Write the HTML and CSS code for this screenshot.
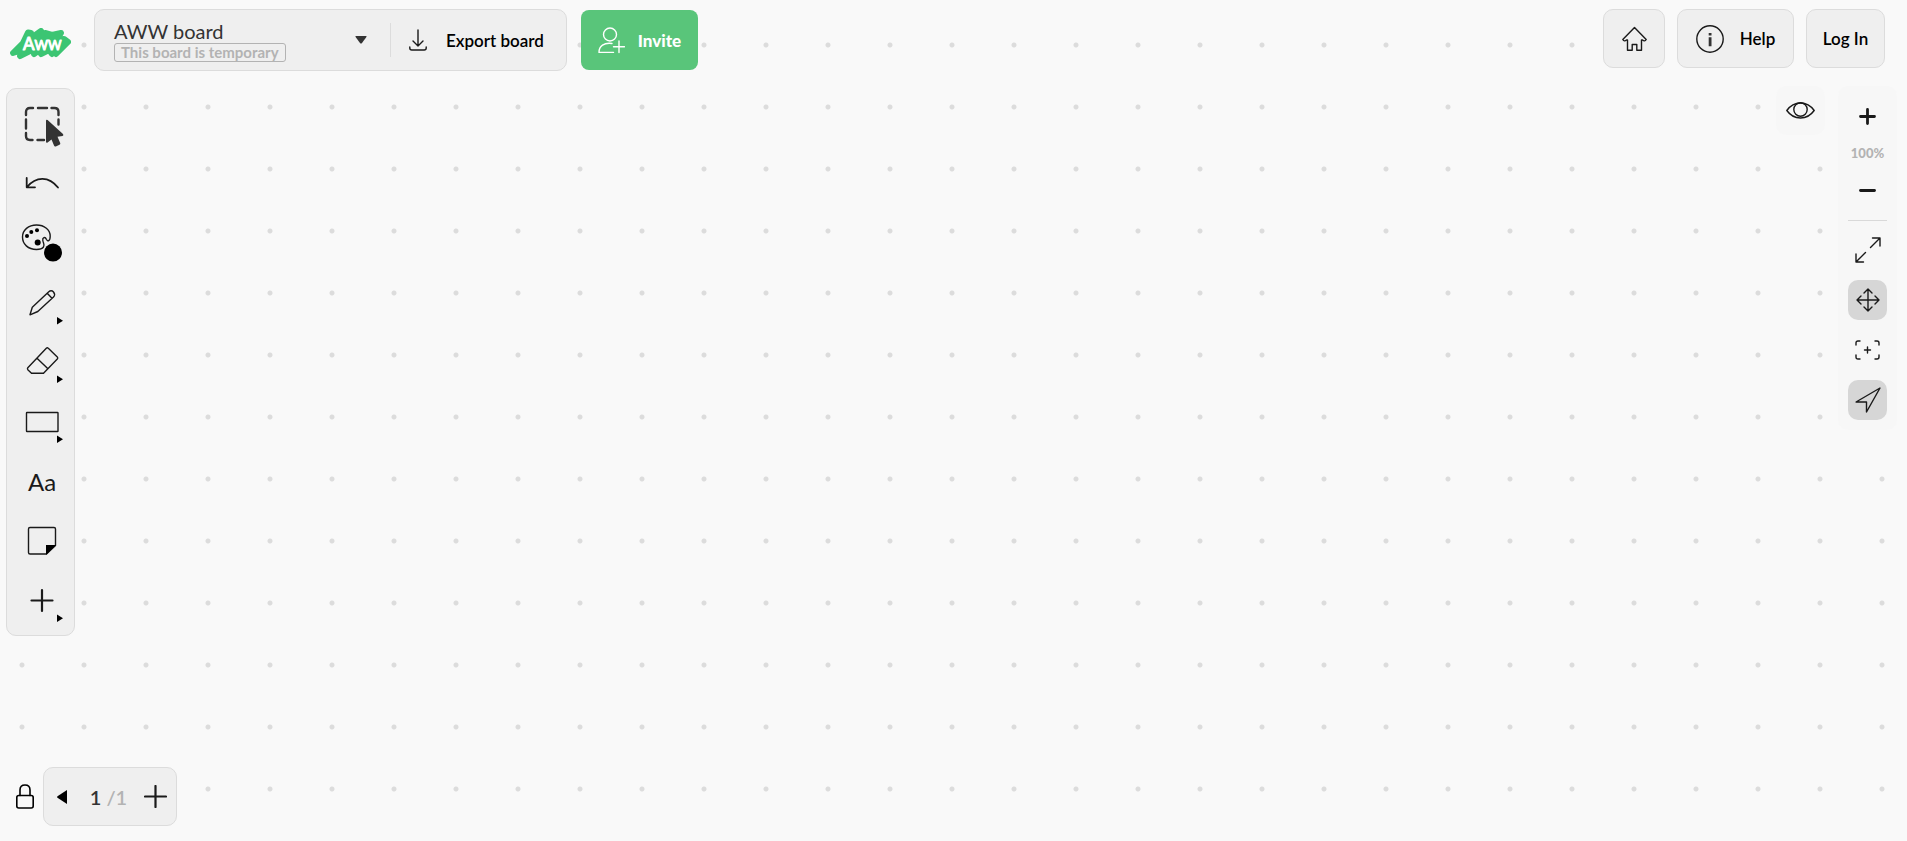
FILE: index.html
```
<!doctype html>
<html lang="en">
<head>
	<meta charset="UTF-8">
	<meta name="viewport" content="width=device-width, initial-scale=1">
	<title>AWW board</title>
	<link rel="stylesheet" href="styles.css">
</head>
<body>
	<!-- top bar -->
	<header class="topbar">
		<a href="#" class="logo" aria-label="AWW">
			<svg width="61" height="32" viewBox="0 0 61 32">
				<path class="logo-blob" d="M3 25L13 15L18 4.500L21 5L17 13L31 3L26 12L35 5L42 7L51 5L46 13L54 11L58 14L46 26L49 19L42 26L39 22L31 26L32 20L24 26L24 21L10 28L13 22Z"/>
				<text class="logo-text" x="13" y="22"><tspan class="logo-first">A</tspan>WW</text>
			</svg>
		</a>
		<div class="panel board">
			<button class="board-name">
				<span class="board-info">
					<span class="board-title">AWW board</span>
					<span class="board-tag">This board is temporary</span>
				</span>
				<svg width="12" height="8" viewBox="0 0 12 8"><path class="fill-dark" d="M1 0h10q1 0 .4 1L7 7q-1 1-2 0L.6 1Q0 0 1 0z"/></svg>
			</button>
			<button class="export">
				<svg width="18" height="22" viewBox="0 0 18 22"><path d="M9 1v16M4 12l5 5 5-5M.8 18v1q0 2 2 2h12.400q2 0 2-2v-1"/></svg>
				Export board
			</button>
		</div>
		<button class="invite">
			<svg width="27" height="27" viewBox="0 0 27 27"><circle cx="12" cy="7.500" r="6.500"/><path d="M14 16.500C6 15.500 1 19 1 25.400H15.500M21 14v11.500M15.500 19.700h11"/></svg>
			Invite
		</button>
		<nav class="account">
			<button class="panel home" aria-label="Home">
				<svg width="25" height="26" viewBox="0 0 25 26"><path d="M12.500 1.500L.8 13.500q1.500 2.500 3.700.5h1v10.200h4.700v-5.700h4.600v5.700h4.700V14h1q2.200 2 3.700-.5z"/></svg>
			</button>
			<button class="panel help">
				<svg width="28" height="28" viewBox="0 0 28 28"><circle cx="14" cy="14" r="13.200"/><path class="fill-dark" d="M12.700 8h2.800v2.600h-2.800zM12.700 12.200h2.800v9h-2.800z"/></svg>
				Help
			</button>
			<button class="panel login">Log In</button>
		</nav>
	</header>

	<main class="workspace">
		<!-- drawing tools -->
		<div class="panel tools">
			<button aria-label="Select">
				<svg width="47" height="47" viewBox="0 0 47 47">
					<path class="marquee" d="M9 15v-3q0-4 4-4h3M21 8h9M34.500 8h3q4 0 4 4v3M41.500 19.500v5M9 19.500v9M9 33v3q0 4 4 4h2.500M20.500 40h6.500"/>
					<path class="fill-dark" d="M29 21q0-2 1.600-1L46 34q1 1.500-.5 1.900l-5 .8 2.700 6.300q.5 1.300-.7 1.800l-3.700 1.600q-1.300.4-1.800-.8L34.500 39.500l-3.900 3q-1.600.7-1.600-1z"/>
				</svg>
			</button>
			<button aria-label="Undo">
				<svg width="47" height="47" viewBox="0 0 47 47"><path class="thick" d="M41 27.500C32 16 19 16 10 27M9.700 18v9.300H18"/></svg>
			</button>
			<button aria-label="Color">
				<svg width="47" height="47" viewBox="0 0 47 47">
					<path d="M19.500 6C27.500 6 33.200 11 33.200 17C33.200 22.500 30.500 22.500 29.500 20.500C28 17 25.300 18.500 25.800 21.500C26.200 24 28 25.500 26.500 28C25 30 22 30.500 19.500 30.500C11 30.500 5.500 25 5.500 18C5.500 11 11.500 6 19.500 6z"/>
					<g class="fill-black"><circle cx="10" cy="17" r="2"/><circle cx="14.300" cy="13" r="2"/><circle cx="20" cy="11.300" r="2"/><circle cx="20.700" cy="23.600" r="3"/><circle cx="36" cy="33.600" r="9"/></g>
				</svg>
			</button>
			<button aria-label="Pencil">
				<svg width="47" height="47" viewBox="0 0 47 47">
					<path d="M13 35.800l2.300-7.600L31.500 13q2.800-2.500 5 0t0 5L20.800 32.500zM30.200 14.300l4.800 5"/>
					<path class="fill-black" d="M40 38v7.500l6-3.700z"/>
				</svg>
			</button>
			<button aria-label="Eraser">
				<svg width="47" height="47" viewBox="0 0 47 47">
					<path d="M29.300 10.300q1-1 2 0l9 8.600q1 1 0 2L26.500 35.200H14.500l-3.700-3.500q-.7-1 0-2zM20 20.200l10.700 10.300"/>
					<path class="fill-black" d="M40 37.500V45l6-3.700z"/>
				</svg>
			</button>
			<button aria-label="Shape">
				<svg width="47" height="47" viewBox="0 0 47 47">
					<rect x="9.500" y="14.500" width="31.500" height="19" rx=".5"/>
					<path class="fill-black" d="M40 37.500V45l6-3.700z"/>
				</svg>
			</button>
			<button class="text-tool">Aa</button>
			<button aria-label="Sticky note">
				<svg width="47" height="47" viewBox="0 0 47 47">
					<path d="M13 10.500h24q1.500 0 1.500 1.500v16.500L29.500 37H13q-1.500 0-1.500-1.500V12q0-1.500 1.500-1.500z"/>
					<path class="fill-black" d="M29 28h10l-9.500 9.500H29z"/>
				</svg>
			</button>
			<button aria-label="More tools">
				<svg width="47" height="47" viewBox="0 0 47 47">
					<path class="bold" d="M14.500 23.500h21M25 13v21"/>
					<path class="fill-black" d="M40 37.500V45l6-3.700z"/>
				</svg>
			</button>
		</div>

		<!-- view controls -->
		<div class="view">
			<button class="soft preview" aria-label="Preview">
				<svg width="29" height="17" viewBox="0 0 29 17"><path d="M.8 8.500C8-1.500 21-1.500 28.200 8.500C21 18.500 8 18.500.8 8.500z"/><circle cx="14.500" cy="7.500" r="6.700"/></svg>
			</button>
			<div class="soft zoom">
				<button aria-label="Zoom in">
					<svg width="17" height="17" viewBox="0 0 17 17"><path class="heavy" d="M1.500 8.500h14M8.500 1.500v14"/></svg>
				</button>
				<span class="zoom-level">100%</span>
				<button aria-label="Zoom out">
					<svg width="17" height="17" viewBox="0 0 17 17"><path class="heavy" d="M1.500 8.500h14"/></svg>
				</button>
				<hr>
				<button aria-label="Full screen">
					<svg width="26" height="26" viewBox="0 0 26 26"><path d="M15.500 10.500L25 1M17.500 1H25v8M10.500 15.500L1 25M1 17v8h7.500"/></svg>
				</button>
				<button class="on" aria-label="Pan">
					<svg width="24" height="24" viewBox="0 0 24 24"><path d="M1 12h22M12 1v22M8 5l4-4 4 4M8 19l4 4 4-4M5 8l-4 4 4 4M19 8l4 4-4 4"/></svg>
				</button>
				<button aria-label="Center">
					<svg width="26" height="20" viewBox="0 0 26 20"><path d="M1 5V3q0-2 2-2h2M20 1h2q2 0 2 2v2M24 15v2q0 2-2 2h-2M5 19H3q-2 0-2-2v-2M9.500 10h6M12.500 7v6"/></svg>
				</button>
				<button class="on" aria-label="Follow">
					<svg width="26" height="26" viewBox="0 0 26 26"><path d="M25 1L1 15h10.500v10z"/></svg>
				</button>
			</div>
		</div>
	</main>

	<!-- pages -->
	<footer class="pages">
		<button class="lock" aria-label="Lock">
			<svg width="18" height="25" viewBox="0 0 18 25"><rect x=".8" y="11.500" width="16.400" height="12.500" rx="2"/><path d="M4 11.500V6q0-5 5-5t5 5v5.500"/></svg>
		</button>
		<div class="panel pager">
			<button aria-label="Previous page">
				<svg width="10" height="14" viewBox="0 0 10 14"><path class="fill-black" d="M10 0v14L.5 7.800q-.8-.8 0-1.600z"/></svg>
			</button>
			<span class="count">1 <span>/1</span></span>
			<button aria-label="Add page">
				<svg width="23" height="23" viewBox="0 0 23 23"><path class="bold" d="M1 11.500h21M11.500 1v21"/></svg>
			</button>
		</div>
	</footer>
</body>
</html>
```

FILE: styles.css
```
* {
	box-sizing: border-box;
	margin: 0;
	padding: 0;
}

body {
	display: flex;
	flex-direction: column;
	min-height: 100vh;
	font-family: Lato, "Liberation Sans", sans-serif;
	font-size: 17px;
	color: #000;
	background-color: #f9f9f9;
	background-image: radial-gradient(circle, #dcdcdc 2px, transparent 3px);
	background-size: 62px 62px;
	background-position: -9px 14px;
}

button {
	display: flex;
	align-items: center;
	justify-content: center;
	border: 0;
	background: none;
	font: inherit;
	color: inherit;
	cursor: pointer;
}

svg {
	display: block;
	flex: none;
	fill: none;
	stroke: #1a1a1a;
	stroke-width: 1.4;
	stroke-linecap: round;
	stroke-linejoin: round;
}

.thick {
	stroke-width: 1.8;
}

.bold {
	stroke-width: 2.2;
}

.heavy {
	stroke-width: 2.8;
}

.fill-dark {
	fill: #333;
	stroke: none;
}

.fill-black {
	fill: #000;
	stroke: none;
}

.panel {
	background: #efefef;
	border: 1px solid #dcdcdc;
	border-radius: 10px;
}

/* top bar */
.topbar {
	display: flex;
	align-items: flex-start;
	padding: 9px 22px 0 10px;
}

.logo {
	margin: 19px 23px 0 0;
}

.logo-blob {
	fill: #3cc573;
	stroke: #3cc573;
	stroke-width: 6;
}

.logo-text {
	fill: #fff;
	stroke: #fff;
	stroke-width: 1;
	font-size: 13px;
}

.logo-first {
	font-size: 17px;
}

.board {
	display: flex;
	align-items: center;
	width: 473px;
	height: 62px;
}

.board-name {
	justify-content: space-between;
	width: 296px;
	height: 34px;
	padding: 0 23px 0 19px;
	border-right: 1px solid #dcdcdc;
}

.board-info {
	display: flex;
	flex-direction: column;
	align-items: flex-start;
}

.board-title {
	font-size: 20px;
	line-height: 24px;
	color: #333;
}

.board-tag {
	padding: 0 6px;
	border: 1px solid #b3b3b3;
	border-radius: 3px;
	font-size: 15px;
	font-weight: 700;
	line-height: 17px;
	color: #b3b3b3;
}

.export {
	flex: 1;
	gap: 19px;
	height: 60px;
	padding-right: 4px;
	font-weight: 600;
}

.invite {
	gap: 13px;
	width: 117px;
	height: 60px;
	margin: 1px 0 0 14px;
	border-radius: 8px;
	background: #59c57a;
	color: #fff;
	font-weight: 900;
}

.invite svg {
	stroke: #fff;
}

.account {
	display: flex;
	gap: 12px;
	margin-left: auto;
	font-weight: 600;
}

.account button {
	height: 59px;
}

.home {
	width: 62px;
}

.help {
	gap: 16px;
	width: 117px;
}

.login {
	width: 79px;
}

/* tools on the left, view controls on the right */
.workspace {
	display: flex;
	flex: 1;
	align-items: flex-start;
	justify-content: space-between;
	padding: 17px 10px 17px 6px;
}

.tools {
	display: grid;
	grid-auto-rows: 1fr;
	width: 69px;
	min-height: 548px;
	padding: 5px 0;
}

.tools .text-tool {
	padding-left: 3px;
	font-size: 24px;
	color: #1a1a1a;
}

.marquee {
	stroke: #333;
	stroke-width: 2.4;
}

.view {
	display: flex;
	align-items: flex-start;
	gap: 13px;
	margin-top: -2px;
}

.soft {
	border-radius: 10px;
	background: #f7f7f7;
}

.preview {
	width: 49px;
	height: 49px;
}

.zoom {
	display: flex;
	flex-direction: column;
	width: 59px;
	padding: 10px;
}

.zoom button {
	height: 40px;
	border-radius: 10px;
}

.zoom-level {
	font-size: 13px;
	font-weight: 900;
	line-height: 34px;
	text-align: center;
	color: #b3b3b3;
}

.zoom hr {
	margin: 10px 0 9px;
	border: 0;
	border-top: 1px solid #d9d9d9;
}

.zoom hr ~ button + button {
	margin-top: 10px;
}

.zoom .on {
	background: #d6d6d6;
}

/* page switcher */
.pages {
	display: flex;
	align-items: center;
	padding: 0 6px 15px;
}

.lock {
	width: 37px;
	height: 59px;
	background: #f9f9f9;
}

.lock svg {
	stroke: #000;
	stroke-width: 1.6;
}

.pager {
	display: flex;
	align-items: center;
	justify-content: space-between;
	width: 134px;
	height: 59px;
	padding: 0 9px 0 13px;
}

.count {
	margin-left: 6px;
	font-size: 20px;
	font-weight: 600;
	color: #333;
}

.count span {
	color: #b3b3b3;
}
```
